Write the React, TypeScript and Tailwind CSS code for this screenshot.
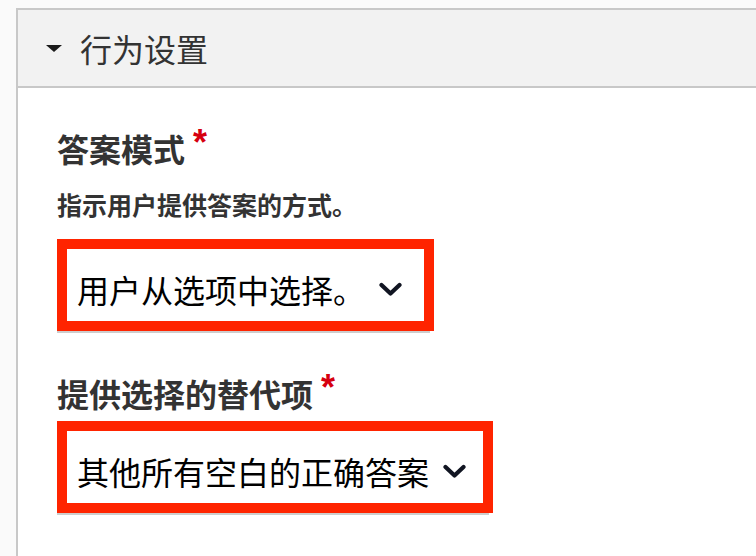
import type { ReactNode } from "react";

const font = { fontFamily: '"Noto Sans CJK SC", "Liberation Sans", sans-serif' };

function Chevron() {
  return (
    <svg width="23" height="15" viewBox="0 0 23 15" className="shrink-0">
      <path
        d="M2.5 3 L11.5 11.5 L20.5 3"
        fill="none"
        stroke="#111522"
        strokeWidth="4.2"
        strokeLinecap="round"
        strokeLinejoin="round"
      />
    </svg>
  );
}

function Label({ children }: { children: ReactNode }) {
  return (
    <div className="flex items-start text-[32px] leading-[40px] font-bold text-[#333]">
      <span>{children}</span>
      <span
        className="ml-[8px] -mt-[5px] text-[36px] font-bold text-[#d6000f]"
        style={{ fontFamily: '"Liberation Sans", sans-serif' }}
      >
        *
      </span>
    </div>
  );
}

function Select({ value, width }: { value: string; width: string }) {
  return (
    <div
      className={`${width} h-[92px] border-[10px] border-[#ff2400] bg-white shadow-[-2px_4px_0_-2px_#cdcdcd] flex items-center pl-[10px] pr-[20px] pt-[8px]`}
    >
      <span className="text-[32px] leading-[40px] text-black whitespace-nowrap">{value}</span>
      <span className="ml-[14px]">
        <Chevron />
      </span>
    </div>
  );
}

export default function App() {
  return (
    <div className="min-h-screen bg-[#fafafa] pt-[8px] pl-[16px] overflow-hidden" style={font}>
      <div className="border-t-2 border-l-2 border-[#c8c8c8] bg-white min-h-[560px]">
        {/* Section header */}
        <div className="h-[78px] bg-[#f2f2f2] border-b-2 border-[#c8c8c8] flex items-center pl-[28px]">
          <svg width="16" height="8" viewBox="0 0 16 8" className="mr-[18px] mt-[2px]">
            <path d="M0 0 L16 0 L8 7 Z" fill="#1a1a1a" />
          </svg>
          <span className="text-[32px] leading-[40px] text-[#333]">行为设置</span>
        </div>

        <div className="pl-[39px] pt-[40px]">
          <Label>答案模式</Label>
          <p className="mt-[20px] text-[25px] leading-[32px] font-semibold text-[#333]">
            指示用户提供答案的方式。
          </p>
          <div className="mt-[19px]">
            <Select value="用户从选项中选择。" width="w-[377px]" />
          </div>

          <div className="mt-[42px]">
            <Label>提供选择的替代项</Label>
          </div>
          <div className="mt-[8px]">
            <Select value="其他所有空白的正确答案" width="w-[436px]" />
          </div>
        </div>
      </div>
    </div>
  );
}
